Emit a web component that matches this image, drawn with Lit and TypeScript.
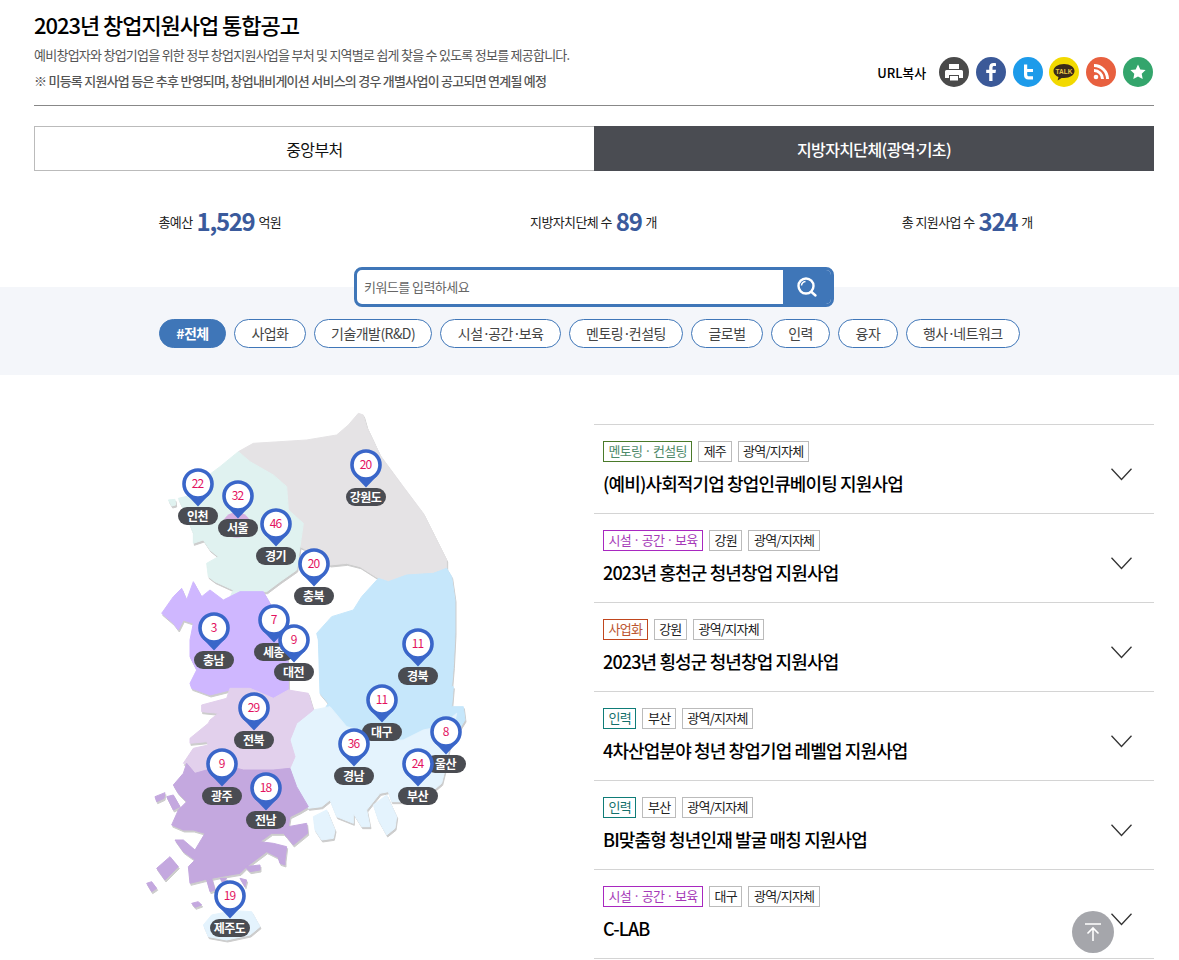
import { LitElement, html, css, svg } from "lit";
import { customElement } from "lit/decorators.js";

const stats = [
  { a: "총예산", n: "1,529", b: "억원" },
  { a: "지방자치단체 수", n: "89", b: "개" },
  { a: "총 지원사업 수", n: "324", b: "개" },
];
const chips = ["#전체", "사업화", "기술개발(R&D)", "시설·공간·보육", "멘토링·컨설팅", "글로벌", "인력", "융자", "행사·네트워크"];
const items = [
  { c: "멘토링 · 컨설팅", k: "green", r: "제주", t: "(예비)사회적기업 창업인큐베이팅 지원사업" },
  { c: "시설 · 공간 · 보육", k: "purple", r: "강원", t: "2023년 홍천군 청년창업 지원사업" },
  { c: "사업화", k: "red", r: "강원", t: "2023년 횡성군 청년창업 지원사업" },
  { c: "인력", k: "teal", r: "부산", t: "4차산업분야 청년 창업기업 레벨업 지원사업" },
  { c: "인력", k: "teal", r: "부산", t: "BI맞춤형 청년인재 발굴 매칭 지원사업" },
  { c: "시설 · 공간 · 보육", k: "purple", r: "대구", t: "C-LAB" },
];
const pins: [string, number, number, number][] = [
  ["인천", 22, 197.5, 484], ["서울", 32, 237.5, 496], ["경기", 46, 275.5, 524], ["강원도", 20, 365.5, 465],
  ["충북", 20, 313.5, 564], ["충남", 3, 213.5, 628], ["세종", 7, 273.5, 620], ["대전", 9, 293.5, 640],
  ["경북", 11, 417.5, 644], ["대구", 11, 381.5, 700], ["울산", 8, 445.5, 732], ["전북", 29, 253.5, 708],
  ["경남", 36, 353.5, 744], ["부산", 24, 417.5, 764], ["광주", 9, 221.5, 764], ["전남", 18, 265.5, 788],
  ["제주도", 19, 229.5, 896],
];
const GRAY = "#e5e3e5", MINT = "#e0f2f0", VIO = "#cfb7ff", SKY = "#c6e7fb", PALE = "#e4f3fd", LILAC = "#e2d0ec", PURP = "#c4a8df";
// outlines in units of a third of a pixel; north half from (140,400)
const north: [string, string][] = [
  [GRAY, "295,155 340,130 420,125 500,120 590,105 625,75 655,40 670,45 680,80 720,165 790,260 850,340 880,400 920,480 920,505 880,520 800,525 745,545 715,535 660,500 620,490 570,495 490,445 480,440 490,370 445,330 440,260 400,225 330,185"],
  [MINT, "295,155 330,185 400,225 440,260 445,330 490,370 480,440 470,510 420,545 380,575 300,575 270,592 280,570 225,545 205,530 200,490 235,470 210,450 190,420 160,430 160,400 140,350 115,295 180,280 200,230 240,200"],
  [MINT, "85,300 105,298 107,315 95,318"],
  [VIO, "65,640 100,590 125,565 140,600 160,545 185,590 210,570 250,600 300,575 370,575 390,610 405,660 430,720 445,790 445,870 400,895 330,865 270,870 210,885 155,865 150,850 170,810 150,770 150,720 160,670 130,660 115,690 100,670"],
  [SKY, "715,535 745,545 800,525 880,520 920,505 935,530 945,600 945,700 940,800 935,860 940,860 935,920 970,920 975,960 950,1000 900,1040 850,1050 790,1080 720,1085 660,1050 620,1040 570,980 520,990 505,940 545,940 565,910 540,880 535,720 530,700 575,650 640,630 665,590"],
];
// south half from (140,670)
const south: [string, string][] = [
  [PALE, "520,120 570,110 620,170 660,180 720,215 790,210 850,180 900,170 950,130 930,220 915,300 905,340 840,395 755,395 745,365 720,370 680,420 690,470 665,470 640,430 640,460 590,440 570,390 545,410 505,415 470,350 450,295 465,260 450,210 470,160"],
  [PALE, "520,440 560,420 585,480 580,505 545,510 525,480"],
  [PALE, "700,405 740,375 770,440 765,475 740,495 715,450"],
  [PALE, "190,765 215,735 280,722 335,725 360,770 330,795 260,810 205,800"],
  [LILAC, "185,105 260,85 270,55 330,55 400,85 445,60 505,70 520,120 470,160 450,210 465,260 450,295 400,300 310,300 270,290 200,300 165,310 140,280 130,280 160,235 205,225 200,215 150,220 150,205 205,160 210,150 235,130 185,125"],
  [PURP, "100,345 130,310 140,280 165,310 200,300 270,290 310,300 400,300 450,295 470,350 505,410 480,425 450,440 445,470 500,460 503,490 460,525 440,500 430,490 395,490 360,515 400,520 440,530 435,570 420,565 380,545 320,590 300,610 240,620 190,630 150,640 145,590 165,570 130,545 105,510 130,510 165,540 195,490 160,480 130,480 95,465 115,420 140,395 115,370"],
  [PURP, "45,380 75,368 72,385 50,395"],
  [PURP, "80,380 100,375 120,410 100,420"],
  [PURP, "50,595 90,560 115,590 75,630"],
  [PURP, "20,640 35,635 50,655 35,665"],
  [PURP, "155,700 175,695 185,705 165,712"],
  [PURP, "200,630 215,625 225,660 210,665"],
  [PURP, "300,625 320,630 315,650"],
  [PURP, "240,625 260,625 250,640"],
  [PURP, "315,590 360,585 360,600 330,605"],
  [PURP, "415,565 435,570 435,585 420,580"],
];

function chipText(c: string) {
  const parts = c.split("·");
  return parts.map((p, i) => (i === 0 ? p : html`<span class="dot">·</span>${p}`));
}

@customElement("app-root")
export class AppRoot extends LitElement {
  static styles = css`
    :host { display: block; font-family: "Noto Sans CJK KR", "Noto Sans", sans-serif; color: #000; width: 1179px; height: 960px; overflow: hidden; position: relative; background: #fff; }
    * { box-sizing: border-box; }
    .wrap { padding: 0 25px 0 34px; }
    .head { height: 106px; border-bottom: 1px solid #888; display: flex; justify-content: space-between; align-items: flex-start; }
    h1 { margin: 0; font-size: 22px; font-weight: 500; letter-spacing: -1.05px; line-height: 32px; padding-top: 8px; color: #000; }
    .sub { margin: 0; font-size: 13px; line-height: 26px; color: #555; letter-spacing: -0.75px; }
    .sub.first { margin-top: 2px; }
    .sub.bold { font-weight: 500; color: #555; }
    .share { display: flex; align-items: center; margin-top: 57px; margin-right: 1px; }
    .share span { font-size: 13px; font-weight: 500; letter-spacing: -0.1px; margin-right: 13px; }
    .share svg { width: 30px; height: 30px; margin-left: 6.800px; display: block; }
    .share svg:first-of-type { margin-left: 0; }
    .tabs { display: flex; margin-top: 20px; height: 45px; }
    .tab { width: 560px; display: flex; align-items: center; justify-content: center; font-size: 16px; letter-spacing: -0.6px; }
    .tab.off { border: 1px solid #bbb; border-right: 0; color: #111; }
    .tab.on { background: #4a4c52; color: #fff; font-weight: 500; }
    .tab .dot { letter-spacing: -0.3em; margin-left: -0.1em; }
    .dot { letter-spacing: -0.15em; }
    .stats { display: grid; grid-template-columns: repeat(3, 1fr); height: 116px; padding-top: 32px; margin-left: -1px; }
    .stat { display: flex; justify-content: center; align-items: center; height: 36px; font-size: 13px; letter-spacing: -0.6px; gap: 4px; color: #222; }
    .stat b { font-size: 24px; font-weight: 700; color: #3a5a9c; letter-spacing: -1.3px; line-height: 36px; }
    .band { background: #f4f6fa; height: 88px; position: relative; display: flex; justify-content: center; padding-top: 32px; gap: 8px; }
    .search { position: absolute; left: 354px; top: -20px; width: 480px; height: 40px; border: 3px solid #3f76b8; border-radius: 8px; background: #fff; display: flex; overflow: hidden; }
    .search div.ph { flex: 1; font-size: 13px; line-height: 34px; padding-left: 7px; color: #666; letter-spacing: -0.55px; }
    .search div.btn { width: 48px; background: #3f76b8; display: flex; align-items: center; justify-content: center; }
    .chip { height: 29px; border: 1px solid #3f76b8; border-radius: 15px; background: #fff; padding: 0 16.350px; font-size: 14px; line-height: 27px; color: #444; letter-spacing: -0.55px; white-space: nowrap; }
    .chip.on { background: #3f76b8; color: #fff; font-weight: 700; }
    .main { display: flex; }
    .map { width: 560px; height: 585px; position: relative; }
    .map > svg { position: absolute; left: 0; top: 0; filter: drop-shadow(1px 2px 0 #ccc); }
    .pin { position: absolute; width: 40px; height: 42px; margin-left: -20px; margin-top: -16px; }
    .pin svg { position: absolute; left: 2px; top: 0; }
    .num { position: absolute; left: 0; right: 0; top: 6px; text-align: center; font-size: 12px; line-height: 18px; color: #e3125f; letter-spacing: -1px; }
    .lab { position: absolute; left: 0; top: 39px; width: 40px; height: 18px; border-radius: 9px; background: #4a4c52; color: #fff; font-size: 12px; font-weight: 700; line-height: 18px; text-align: center; letter-spacing: -0.5px; }
    .list { width: 560px; padding-top: 49px; }
    .item { height: 89px; border-top: 1px solid #d4d4d4; padding: 16px 0 0 9px; position: relative; }
    .item:last-child { height: 90px; border-bottom: 1px solid #d4d4d4; }
    .tags { display: flex; gap: 6px; }
    .tag { height: 21px; border: 1px solid #bbb; font-size: 13px; line-height: 18px; padding: 0 4.500px; letter-spacing: -0.75px; color: #222; white-space: nowrap; }
    .tag.green { border-color: #4a7a2a; color: #4f8a6a; }
    .tag.purple { border-color: #a828c0; color: #a63ab8; }
    .tag.red { border-color: #c0461e; color: #bb5530; }
    .tag.teal { border-color: #0f7c78; color: #14706c; }
    .ttl { font-size: 18px; font-weight: 500; line-height: 26px; margin-top: 8px; letter-spacing: -0.87px; color: #000; }
    .chev { position: absolute; right: 22px; top: 43px; }
    .top { position: absolute; left: 1072px; top: 911px; width: 42px; height: 42px; border-radius: 50%; background: #a5a6ab; display: flex; align-items: center; justify-content: center; }
  `;

  icons() {
    return html`
      <svg viewBox="0 0 30 30"><circle cx="15" cy="15" r="15" fill="#4a4a4a"/><path d="M10 7h10v5H10zM7.5 13h15a1.5 1.5 0 0 1 1.5 1.5V21h-4v-3H10v3H6v-6.5A1.5 1.5 0 0 1 7.500 13zM11 19h8v4.500h-8z" fill="#fff"/></svg>
      <svg viewBox="0 0 30 30"><circle cx="15" cy="15" r="15" fill="#3b5998"/><path d="M16.500 24v-8h3l.5-3.300h-3.500v-2c0-1 .4-1.600 1.700-1.600H20V6.200c-.4 0-1.400-.2-2.500-.2-2.600 0-4.300 1.500-4.300 4.300v2.400h-3V16h3v8z" fill="#fff"/></svg>
      <svg viewBox="0 0 30 30"><circle cx="15" cy="15" r="15" fill="#1d9bea"/><path d="M11 7.500h3.200V12H20v3h-5.800v2.500c0 1.300.7 1.800 1.900 1.800H20v3.200h-4.500c-3 0-4.500-1.700-4.500-4.500z" fill="#fff"/></svg>
      <svg viewBox="0 0 30 30"><circle cx="15" cy="15" r="15" fill="#f2d900"/><path d="M15 7c-6 0-10.500 3-10.500 7 0 2.700 2 4.900 5 6l-.9 3.600 4-2.700 2.400.1c6 0 10.500-3 10.500-7s-4.500-7-10.500-7z" fill="#3a2a1a"/><text x="15" y="16.500" text-anchor="middle" font-size="6.500" font-weight="700" fill="#e8c84a" font-family="Liberation Sans, sans-serif">TALK</text></svg>
      <svg viewBox="0 0 30 30"><circle cx="15" cy="15" r="15" fill="#e8603f"/><circle cx="10" cy="20" r="2.300" fill="#fff"/><path d="M8 13.500a8.500 8.500 0 0 1 8.500 8.500M8 8.500a13.500 13.500 0 0 1 13.500 13.500" fill="none" stroke="#fff" stroke-width="3"/></svg>
      <svg viewBox="0 0 30 30"><circle cx="15" cy="15" r="15" fill="#34a56c"/><path d="M15 7.500l2.300 4.900 5.300.7-3.900 3.600 1 5.300-4.700-2.600-4.700 2.600 1-5.300-3.900-3.600 5.300-.7z" fill="#fff"/></svg>`;
  }

  render() {
    return html`
      <div class="wrap">
        <div class="head">
          <div>
            <h1>2023년 창업지원사업 통합공고</h1>
            <p class="sub first">예비창업자와 창업기업을 위한 정부 창업지원사업을 부처 및 지역별로 쉽게 찾을 수 있도록 정보를 제공합니다.</p>
            <p class="sub bold">※ 미등록 지원사업 등은 추후 반영되며, 창업내비게이션 서비스의 경우 개별사업이 공고되면 연계될 예정</p>
          </div>
          <div class="share"><span>URL복사</span>${this.icons()}</div>
        </div>
        <div class="tabs">
          <div class="tab off">중앙부처</div>
          <div class="tab on"><span>지방자치단체(광역<span class="dot">·</span>기초)</span></div>
        </div>
        <div class="stats">
          ${stats.map((s) => html`<div class="stat">${s.a} <b>${s.n}</b> ${s.b}</div>`)}
        </div>
      </div>
      <div class="band">
        <div class="search">
          <div class="ph">키워드를 입력하세요</div>
          <div class="btn">
            <svg width="24" height="24" viewBox="0 0 24 24" fill="none" stroke="#fff" stroke-width="2.400"><circle cx="11" cy="11" r="7.500"/><path d="M16.500 17l4 3.500" stroke-linecap="round"/><path d="M6.500 10.500a4.500 4.500 0 0 1 4-4" stroke-width="1.500"/></svg>
          </div>
        </div>
        ${chips.map((c, i) => html`<div class="chip ${i === 0 ? "on" : ""}">${chipText(c)}</div>`)}
      </div>
      <div class="wrap main">
        <div class="map">
          <svg width="560" height="585" viewBox="34 375 560 585">
            <g transform="translate(140 400) scale(.33333)">
              ${north.map(([f, p]) => svg`<polygon points=${p} fill=${f} stroke=${f} stroke-width="3" stroke-linejoin="round"/>`)}
              <ellipse cx="290" cy="375" rx="42" ry="38" fill="#d6b0e0"/>
            </g>
            <g transform="translate(140 670) scale(.33333)">
              ${south.map(([f, p]) => svg`<polygon points=${p} fill=${f} stroke=${f} stroke-width="3" stroke-linejoin="round"/>`)}
            </g>
          </svg>
          ${pins.map(([l, n, x, y]) => html`
            <div class="pin" style="left:${x - 34}px;top:${y - 375}px">
              <div class="lab">${l}</div>
              <svg width="36" height="40" viewBox="0 0 36 40">
                <path d="M7 27L18 38.500L29 27Z" fill="#3a66c9"/>
                <circle cx="18" cy="16" r="14" fill="#fff" stroke="#3a66c9" stroke-width="3.600"/>
              </svg>
              <div class="num">${n}</div>
            </div>`)}
        </div>
        <div class="list">
          ${items.map((it) => html`
            <div class="item">
              <div class="tags">
                <div class="tag ${it.k}">${it.c}</div>
                <div class="tag">${it.r}</div>
                <div class="tag">광역/지자체</div>
              </div>
              <div class="ttl">${it.t}</div>
              <svg class="chev" width="21" height="13" viewBox="0 0 21 13" fill="none" stroke="#333" stroke-width="1.300"><path d="M.5 .8L10.500 11.500L20.500 .8"/></svg>
            </div>`)}
        </div>
      </div>
      <div class="top">
        <svg width="18" height="20" viewBox="0 0 18 20" fill="none" stroke="#fff" stroke-width="1.600"><path d="M1 2h16M9 19V6M3.500 11.500L9 6l5.500 5.500"/></svg>
      </div>
    `;
  }
}
